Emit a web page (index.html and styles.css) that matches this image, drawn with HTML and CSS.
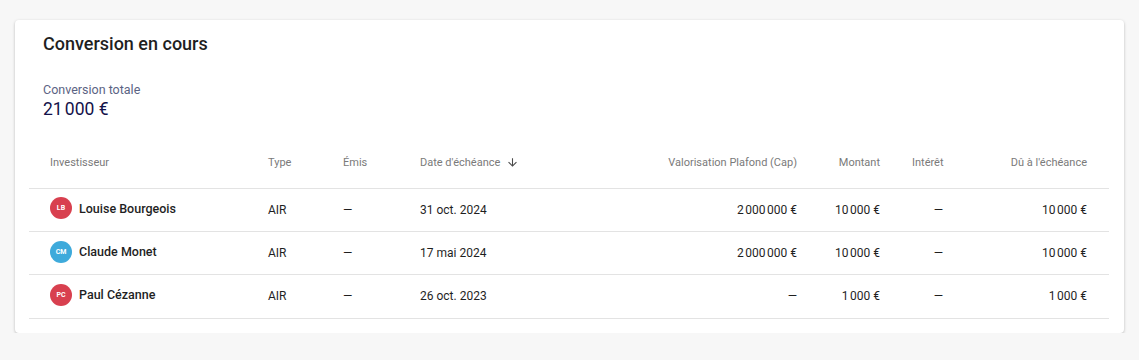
FILE: index.html
```html
<!DOCTYPE html>
<html lang="fr">
<head>
  <meta charset="UTF-8" />
  <meta name="viewport" content="width=device-width, initial-scale=1.0" />
  <title>Conversion en cours</title>
  <link rel="stylesheet" href="styles.css">
</head>
<body>

  <div class="card">
    <h2 class="card-title">Conversion en cours</h2>

    <div class="summary">
      <div class="summary-label">Conversion totale</div>
      <div class="summary-value">21&#8239;000&nbsp;€</div>
    </div>

    <table class="conv-table">
      <colgroup>
        <col style="width: 223px">
        <col style="width: 75px">
        <col style="width: 77px">
        <col style="width: 196px">
        <col style="width: 213px">
        <col style="width: 83px">
        <col style="width: 63px">
        <col style="width: 150px">
      </colgroup>
      <thead>
        <tr>
          <th class="first">Investisseur</th>
          <th>Type</th>
          <th>Émis</th>
          <th>Date d'échéance<svg class="sort-icon" viewBox="0 0 24 24" width="13" height="13"><path d="M20 12l-1.41-1.41L13 16.17V4h-2v12.17l-5.58-5.59L4 12l8 8 8-8z"/></svg></th>
          <th class="num">Valorisation Plafond (Cap)</th>
          <th class="num">Montant</th>
          <th class="num">Intérêt</th>
          <th class="num last">Dû à l'échéance</th>
        </tr>
      </thead>
      <tbody>
        <tr>
          <td class="first"><span class="investor"><span class="avatar red">LB</span>Louise Bourgeois</span></td>
          <td>AIR</td>
          <td>—</td>
          <td>31 oct. 2024</td>
          <td class="num">2&#8239;000&#8239;000&nbsp;€</td>
          <td class="num">10&#8239;000&nbsp;€</td>
          <td class="num">—</td>
          <td class="num last">10&#8239;000&nbsp;€</td>
        </tr>
        <tr>
          <td class="first"><span class="investor"><span class="avatar blue">CM</span>Claude Monet</span></td>
          <td>AIR</td>
          <td>—</td>
          <td>17 mai 2024</td>
          <td class="num">2&#8239;000&#8239;000&nbsp;€</td>
          <td class="num">10&#8239;000&nbsp;€</td>
          <td class="num">—</td>
          <td class="num last">10&#8239;000&nbsp;€</td>
        </tr>
        <tr>
          <td class="first"><span class="investor"><span class="avatar red">PC</span>Paul Cézanne</span></td>
          <td>AIR</td>
          <td>—</td>
          <td>26 oct. 2023</td>
          <td class="num">—</td>
          <td class="num">1&#8239;000&nbsp;€</td>
          <td class="num">—</td>
          <td class="num last">1&#8239;000&nbsp;€</td>
        </tr>
      </tbody>
    </table>
  </div>

</body>
</html>
```

FILE: styles.css
```css
* {
  box-sizing: border-box;
  margin: 0;
  padding: 0;
  font-family: 'Roboto', 'Liberation Sans', sans-serif;
}

body {
  background: #f7f7f7;
  color: #1f1f1f;
  padding: 20px 15px 0 15px;
}

.card {
  background: #fff;
  border-radius: 4px;
  box-shadow: 0 1px 3px rgba(0, 0, 0, 0.25);
  padding: 12px 14px 14px 14px;
}

.card-title {
  font-size: 18px;
  font-weight: 500;
  line-height: 24px;
  margin-left: 14px;
  color: #1f1f1f;
}

.summary {
  margin: 26px 0 0 14px;
}

.summary-label {
  font-size: 12.5px;
  line-height: 16px;
  color: #5b6383;
}

.summary-value {
  font-size: 17.5px;
  line-height: 20px;
  margin-top: 1px;
  color: #14124a;
}

.conv-table {
  margin-top: 24px;
  width: 1080px;
  border-collapse: collapse;
  table-layout: fixed;
}

.conv-table th {
  font-size: 11px;
  font-weight: 400;
  color: #7a7a7a;
  text-align: left;
  height: 45px;
  padding: 0 16px 6px 16px;
  border-bottom: 1px solid #e3e3e3;
  white-space: nowrap;
}

.conv-table td {
  font-size: 12px;
  color: #1f1f1f;
  height: 43.4px;
  padding: 0 16px;
  border-bottom: 1px solid #e3e3e3;
  white-space: nowrap;
}

.conv-table .first {
  padding-left: 21px;
}

.conv-table .last {
  padding-right: 22px;
}

.conv-table .num {
  text-align: right;
}

.sort-icon {
  fill: #4a4a4a;
  vertical-align: -3px;
  margin-left: 6px;
}

.investor {
  display: flex;
  align-items: center;
  gap: 7px;
  font-weight: 500;
  font-size: 12.5px;
  margin-top: -3px;
}

.avatar {
  width: 22px;
  height: 22px;
  border-radius: 50%;
  color: #fff;
  font-size: 7px;
  font-weight: 700;
  display: flex;
  align-items: center;
  justify-content: center;
  flex-shrink: 0;
}

.avatar.red {
  background: #d8404f;
}

.avatar.blue {
  background: #3eaadb;
}
```
